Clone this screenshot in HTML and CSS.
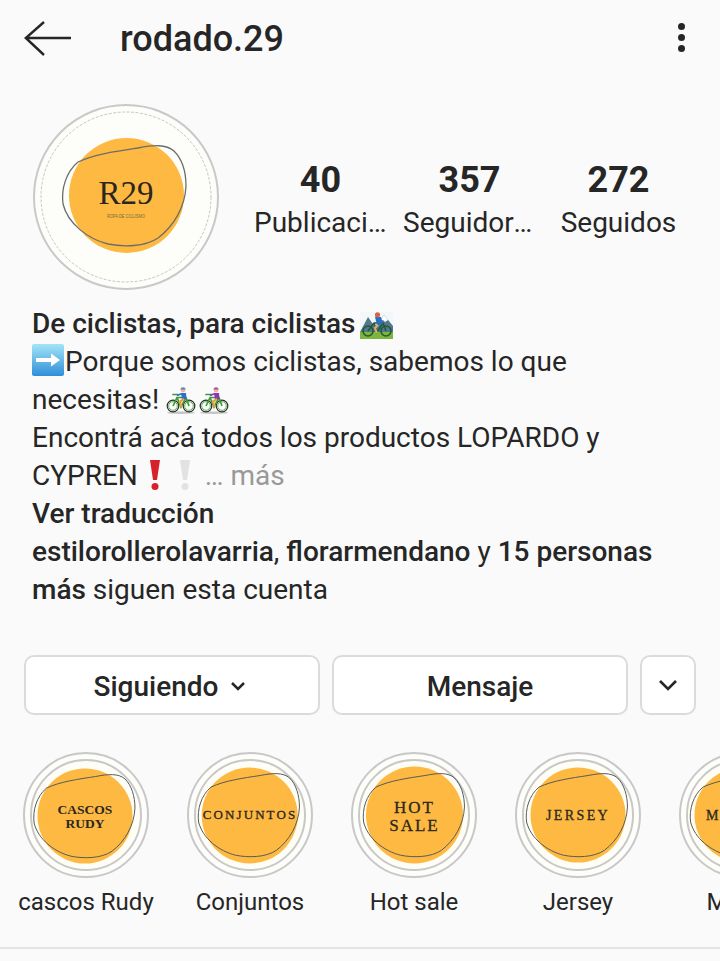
FILE: index.html
```html
<!DOCTYPE html>
<html lang="es">
<head>
  <meta charset="UTF-8">
  <title>rodado.29</title>
  <meta name="viewport" content="width=device-width, initial-scale=1.0">
  <link rel="stylesheet" href="styles.css">
</head>
<body>
  <svg class="defs" width="0" height="0" aria-hidden="true">
    <defs>
      <path id="blob" d="M45 58C62 50 85 47 105 44C120 41 133 40 141 47C149 55 153 68 153 82C152 103 141 122 125 134C112 143 90 143 75 140C55 135 35 120 30 100C28 85 33 68 45 58Z"/>
      <g id="bici">
        <ellipse cx="15" cy="26.700" rx="14" ry="1.300" fill="#c4c4c4"/>
        <circle cx="7" cy="20" r="5.800" fill="#fff" stroke="#2b2b2b" stroke-width="1.200"/>
        <circle cx="23" cy="20" r="5.800" fill="#fff" stroke="#2b2b2b" stroke-width="1.200"/>
        <circle cx="7" cy="20" r="4.300" fill="none" stroke="#58b24a" stroke-width="1"/>
        <circle cx="23" cy="20" r="4.300" fill="none" stroke="#58b24a" stroke-width="1"/>
        <g fill="none" stroke="#3f9a3a" stroke-width="1.700">
          <path d="M7 20L11 11.500L20 11.500L23 20M11 11.500L15 21L20 11.500"/>
          <path d="M7 8.500L12 8.500" stroke-linecap="round"/>
        </g>
        <path d="M15 7L20 7L20.500 13L16 13.500Z" fill="currentColor"/>
        <path d="M16 7.500L11 9.500" stroke="currentColor" stroke-width="1.800"/>
        <path d="M18 13L14 15.500L15.500 21" fill="none" stroke="#e9a23b" stroke-width="2.200"/>
        <circle cx="17" cy="4" r="2.400" fill="#eeb68a"/>
        <path d="M14.300 3.500A2.800 2.800 0 0 1 19.800 3.500Z" fill="currentColor" opacity=".75"/>
      </g>
    </defs>
  </svg>

  <header class="barra">
    <svg class="volver" viewBox="0 0 48 36" width="48" height="36">
      <path d="M20 1L1.800 17L20 34M1.800 17H47" fill="none" stroke="#262626" stroke-width="2.400"/>
    </svg>
    <h1 class="usuario">rodado.29</h1>
    <div class="puntos"><span></span><span></span><span></span></div>
  </header>

  <section class="perfil">
    <svg class="avatar" viewBox="0 0 186 186" width="186" height="186">
      <circle cx="93" cy="93" r="92" fill="#fdfefa" stroke="#c9c9c9" stroke-width="2"/>
      <circle cx="93" cy="93" r="85" fill="none" stroke="#8f8f8f" stroke-width=".5" stroke-dasharray="3 1.500"/>
      <circle cx="93.500" cy="91.500" r="57.500" fill="#fdb941"/>
      <use href="#blob" fill="none" stroke="#6a6e6a" stroke-width="1.300"/>
      <text class="logo" x="93" y="100" text-anchor="middle" font-size="33">R29</text>
      <text class="logo-sub" x="93" y="114" text-anchor="middle" font-size="5" textLength="38" lengthAdjust="spacingAndGlyphs">ROPA DE CICLISMO</text>
    </svg>
    <div class="stats">
      <div class="stat"><b>40</b><span>Publicaciones</span></div>
      <div class="stat"><b>357</b><span>Seguidores</span></div>
      <div class="stat"><b>272</b><span>Seguidos</span></div>
    </div>
  </section>

  <section class="bio">
    <div><b>De ciclistas, para ciclistas</b>
      <svg class="emoji montana" viewBox="0 0 33 27" width="33" height="27">
        <rect width="33" height="27" fill="#f2f8fa"/>
        <path d="M0 20L8 5L15 15L24 3L33 14V27H0Z" fill="#55778a"/>
        <path d="M24 3L20 9L23 8L25 10L28 8Z" fill="#fff"/>
        <rect y="20" width="33" height="7" fill="#7cb53a"/>
        <g fill="none" stroke="#1f5a3a" stroke-width="1.600">
          <circle cx="8" cy="19" r="5"/>
          <circle cx="26" cy="19" r="5"/>
          <path d="M8 19L14 11L23 11L26 19M14 11L17 20L23 11"/>
        </g>
        <path d="M15 5L21 5L23 12L17 13Z" fill="#2b6fc4"/>
        <path d="M18 13L15 16L17 21" fill="none" stroke="#e5a86f" stroke-width="2"/>
        <circle cx="17.500" cy="2.800" r="2.600" fill="#d9623f"/>
      </svg>
    </div>
    <div><svg class="flecha" viewBox="0 0 32 32" width="32" height="32">
        <defs><linearGradient id="azul" x1="0" y1="0" x2="0" y2="1"><stop offset="0" stop-color="#a4e4f8"/><stop offset="1" stop-color="#2f8fd8"/></linearGradient></defs>
        <rect width="32" height="32" rx="2" fill="url(#azul)"/>
        <path d="M4 14H19V9.500L28 16L19 22.500V18H4Z" fill="#fff"/>
      </svg>Porque somos ciclistas, sabemos lo que</div>
    <div>necesitas!
      <svg class="emoji bici" viewBox="0 0 30 28" width="30" height="28"><use href="#bici" color="#2f6fd0"/></svg><svg class="emoji bici" viewBox="0 0 30 28" width="30" height="28"><use href="#bici" color="#8e35b5"/></svg>
    </div>
    <div>Encontrá acá todos los productos LOPARDO y</div>
    <div>CYPREN
      <svg class="emoji excl" viewBox="0 0 12 32" width="12" height="32"><path d="M1 1H11L8 21H4Z" fill="#d8222b"/><circle cx="6" cy="27.500" r="3.500" fill="#d8222b"/></svg>
      <svg class="emoji excl" viewBox="0 0 12 32" width="12" height="32"><path d="M1 1H11L8 21H4Z" fill="#e2e2e2"/><circle cx="6" cy="27.500" r="3.500" fill="#e2e2e2"/></svg>
      <span class="mas">… más</span></div>
    <div><b>Ver traducción</b></div>
    <div><b>estilorollerolavarria</b>, <b>florarmendano</b> y <b>15 personas</b></div>
    <div><b>más</b> siguen esta cuenta</div>
  </section>

  <section class="botones">
    <div class="boton texto">Siguiendo
      <svg class="flechita" viewBox="0 0 16 10" width="16" height="10"><path d="M2 2L8 8L14 2" fill="none" stroke="#262626" stroke-width="2.500"/></svg>
    </div>
    <div class="boton texto">Mensaje</div>
    <div class="boton chico">
      <svg viewBox="0 0 20 12" width="20" height="12"><path d="M2 2L10 10L18 2" fill="none" stroke="#262626" stroke-width="2.600"/></svg>
    </div>
  </section>

  <section class="destacadas">
    <div class="destacada">
      <svg viewBox="0 0 126 126" width="126" height="126">
        <circle class="aro" cx="63" cy="63" r="62"/><circle class="aro-in" cx="63" cy="63" r="55"/>
        <circle class="sol" cx="62" cy="64" r="47.500"/>
        <use href="#blob" class="linea" transform="translate(-13.500 -12) scale(.82 .83)"/>
        <text class="titulo" x="62" y="62" font-size="13.500" font-weight="bold">CASCOS</text>
        <text class="titulo" x="62" y="76" font-size="13.500" font-weight="bold">RUDY</text>
      </svg>
      <span>cascos Rudy</span>
    </div>
    <div class="destacada">
      <svg viewBox="0 0 126 126" width="126" height="126">
        <circle class="aro" cx="63" cy="63" r="62"/><circle class="aro-in" cx="63" cy="63" r="55"/>
        <circle class="sol" cx="62.700" cy="63.500" r="48"/>
        <use href="#blob" class="linea" transform="translate(-13 -13) scale(.82 .83)"/>
        <text class="titulo grueso" x="63" y="67" font-size="13" letter-spacing="2.100">CONJUNTOS</text>
      </svg>
      <span>Conjuntos</span>
    </div>
    <div class="destacada">
      <svg viewBox="0 0 126 126" width="126" height="126">
        <circle class="aro" cx="63" cy="63" r="62"/><circle class="aro-in" cx="63" cy="63" r="55"/>
        <circle class="sol" cx="63.500" cy="63" r="48.500"/>
        <use href="#blob" class="linea" transform="translate(-12 -13) scale(.82 .83)"/>
        <text class="titulo grueso" x="63.500" y="60.500" font-size="17" letter-spacing="2">HOT</text>
        <text class="titulo grueso" x="63.500" y="79" font-size="17" letter-spacing="2">SALE</text>
      </svg>
      <span>Hot sale</span>
    </div>
    <div class="destacada">
      <svg viewBox="0 0 126 126" width="126" height="126">
        <circle class="aro" cx="63" cy="63" r="62"/><circle class="aro-in" cx="63" cy="63" r="55"/>
        <circle class="sol" cx="63" cy="63" r="47.500"/>
        <use href="#blob" class="linea" transform="translate(-13 -13) scale(.82 .83)"/>
        <text class="titulo grueso" x="63" y="68" font-size="14" letter-spacing="2.400">JERSEY</text>
      </svg>
      <span>Jersey</span>
    </div>
    <div class="destacada">
      <svg viewBox="0 0 126 126" width="126" height="126">
        <circle class="aro" cx="63" cy="63" r="62"/><circle class="aro-in" cx="63" cy="63" r="55"/>
        <circle class="sol" cx="63" cy="63" r="47.500"/>
        <use href="#blob" class="linea" transform="translate(-13 -13) scale(.82 .83)"/>
        <text class="titulo grueso" x="63" y="68" font-size="14" letter-spacing="2.400">MALLAS</text>
      </svg>
      <span>Mallas</span>
    </div>
  </section>
</body>
</html>
```

FILE: styles.css
```css
html, body {
  margin: 0;
  height: 961px;
  overflow: hidden;
}
body {
  font-family: Roboto, "Noto Sans", sans-serif;
  background: #fafafa;
  color: #262626;
  width: 720px;
}
b {
  font-weight: 500;
}
.defs {
  display: block;
  height: 0;
}
.barra {
  display: flex;
  align-items: center;
  height: 78px;
  padding-left: 24px;
  padding-right: 35px;
}
.volver {
  flex: none;
}
.usuario {
  margin: 0 0 0 48px;
  flex: 1;
  font-size: 36px;
  font-weight: 500;
}
.puntos {
  display: flex;
  flex-direction: column;
  gap: 4px;
  margin-top: -3px;
}
.puntos span {
  width: 7px;
  height: 7px;
  border-radius: 50%;
  background: #262626;
}
.perfil {
  display: flex;
  align-items: center;
  padding-left: 33px;
  padding-top: 26px;
}
.avatar {
  flex: none;
}
.stats {
  display: flex;
  margin-left: 27px;
  margin-top: 10px;
}
.stat {
  width: 149px;
  display: flex;
  flex-direction: column;
  align-items: center;
}
.stat b {
  font-size: 36px;
  font-weight: 700;
  line-height: 40px;
}
.stat span {
  font-size: 28px;
  line-height: 45px;
  max-width: 133px;
  white-space: nowrap;
  overflow: hidden;
  text-overflow: ellipsis;
}
.bio {
  margin-top: 15px;
  padding-left: 32px;
  font-size: 28px;
  line-height: 38px;
}
.bio > div {
  height: 38px;
  white-space: nowrap;
}
.emoji {
  vertical-align: -4px;
}
.montana {
  vertical-align: -6px;
  margin-left: -2px;
}
.bici {
  vertical-align: -5px;
}
.bici + .bici {
  margin-left: 3px;
}
.flecha {
  vertical-align: -5px;
  margin-right: 1px;
}
.excl {
  vertical-align: -6px;
  margin: 0 7px 0 4px;
}
.mas {
  color: #999;
}
.botones {
  display: flex;
  gap: 12px;
  padding: 0 24px;
  margin-top: 46px;
}
.boton {
  flex: 1;
  height: 60px;
  box-sizing: border-box;
  display: flex;
  align-items: center;
  justify-content: center;
  gap: 12px;
  background: #fff;
  border: 2px solid #dbdbdb;
  border-radius: 10px;
  font-size: 28px;
  font-weight: 500;
}
.boton.texto {
  padding-top: 2px;
}
.flechita {
  margin-right: 4px;
}
.boton.chico {
  flex: none;
  width: 56px;
}
.destacadas {
  display: flex;
  padding-left: 4px;
  margin-top: 37px;
  height: 195px;
  border-bottom: 2px solid #e4e4e4;
  width: 900px;
}
.destacada {
  flex: none;
  width: 164px;
  display: flex;
  flex-direction: column;
  align-items: center;
}
.destacada span {
  margin-top: 7px;
  font-size: 24px;
  line-height: 34px;
  white-space: nowrap;
}
.aro, .aro-in {
  fill: #fdfefa;
  stroke: #c8c8c8;
  stroke-width: 2;
}
.aro-in {
  fill: #fffef6;
}
.sol {
  fill: #fdb941;
}
.linea {
  fill: none;
  stroke: #55595a;
  stroke-width: 1.200;
}
.titulo {
  font-family: "Liberation Serif", serif;
  fill: #2b2620;
  text-anchor: middle;
}
.grueso {
  stroke: #2b2620;
  stroke-width: .3;
}
.logo {
  font-family: "Liberation Serif", serif;
  fill: #2b2620;
}
.logo-sub {
  font-family: "Liberation Sans", sans-serif;
  fill: #7a6a45;
}
```
